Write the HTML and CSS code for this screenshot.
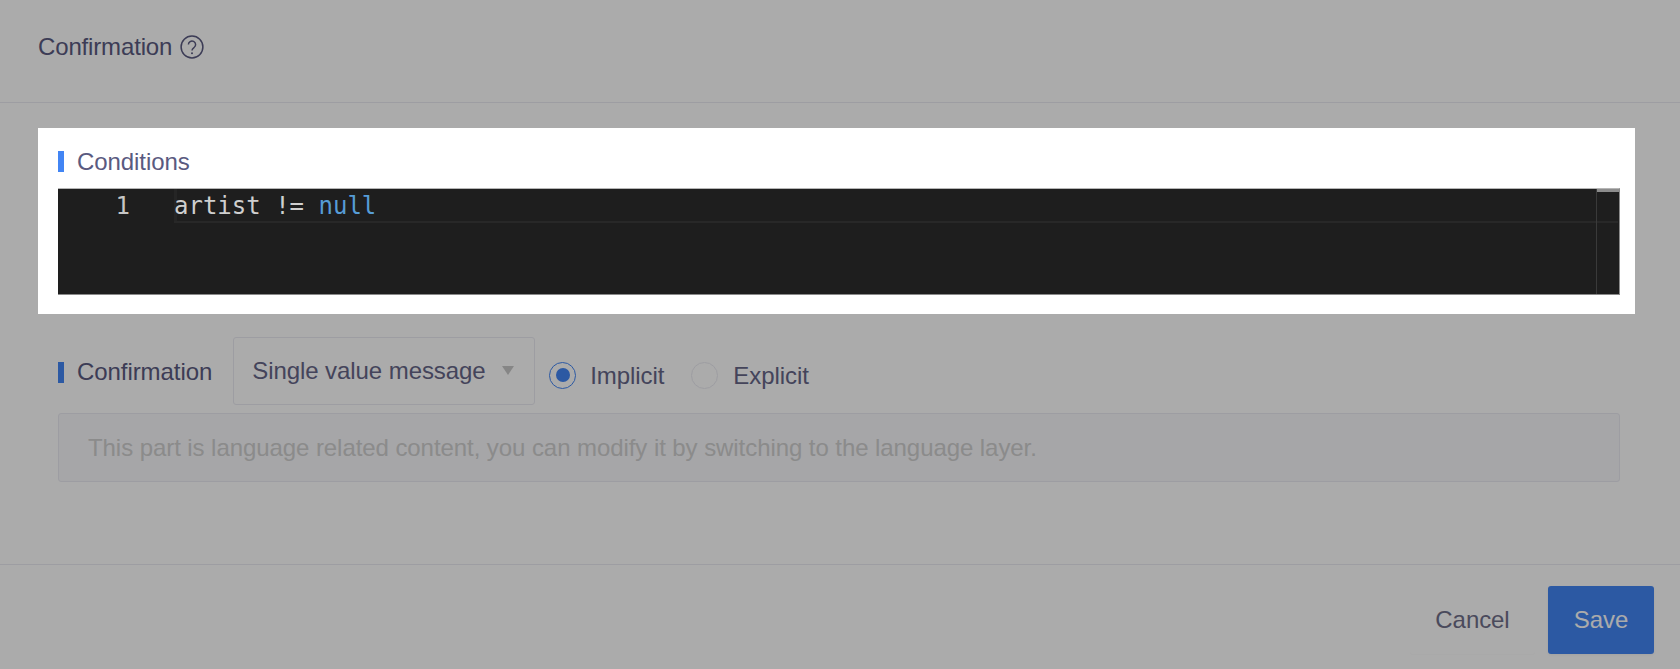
FILE: index.html
```html
<!DOCTYPE html>
<html lang="en">
<head>
<meta charset="utf-8">
<title>Confirmation</title>
<link rel="stylesheet" href="styles.css">
</head>
<body>
<div class="page">
  <header class="header">
    <h1 class="title">Confirmation</h1>
    <svg class="help" viewBox="0 0 24 24" width="24" height="24" aria-hidden="true">
      <circle cx="12" cy="12" r="10.9" fill="none" stroke="currentColor" stroke-width="1.5"/>
      <path d="M8.4 9.6a3.6 3.6 0 1 1 5.7 2.9c-1.3.9-2.1 1.4-2.1 3" fill="none" stroke="currentColor" stroke-width="1.5"/>
      <circle cx="12" cy="18.2" r="1" fill="currentColor"/>
    </svg>
  </header>
  <main class="main">
    <section class="highlight">
      <div class="label label-conditions">Conditions</div>
      <div class="editor">
        <div class="gutter"><span class="lineno">1</span></div>
        <div class="code"><div class="line">artist != <span class="kw">null</span></div></div>
        <div class="ruler"><div class="ruler-thumb"></div></div>
      </div>
    </section>
    <section class="confirm">
      <div class="confirm-row">
        <div class="label">Confirmation</div>
        <div class="select"><span>Single value message</span><i class="caret"></i></div>
        <label class="radio"><span class="dot dot-on"></span><span>Implicit</span></label>
        <label class="radio"><span class="dot"></span><span>Explicit</span></label>
      </div>
      <div class="info">This part is language related content, you can modify it by switching to the language layer.</div>
    </section>
  </main>
  <footer class="footer">
    <button class="btn btn-cancel" type="button">Cancel</button>
    <button class="btn btn-save" type="button">Save</button>
  </footer>
  <div class="mask"></div>
</div>
</body>
</html>
```
FILE: styles.css
```css
* { box-sizing: border-box; }
html, body { margin: 0; padding: 0; height: 100%; background: #fff; }
body {
  font-family: "Liberation Sans", Arial, sans-serif;
  font-size: 24px;
  letter-spacing: -0.07px;
  color: #5a5a80;
  overflow: hidden;
}
.page { height: 669px; display: flex; flex-direction: column; }

.header {
  height: 103px;
  flex: none;
  display: flex;
  align-items: center;
  gap: 8px;
  padding: 0 0 8px 38px;
  border-bottom: 1px solid #ebebf2;
}
.title { margin: 0; font-size: 24px; font-weight: 400; line-height: 32px; color: #5a5a80; letter-spacing: -0.15px; }
.help { color: #5a5a80; flex: none; }

.main { flex: 1; padding: 25px 45px 0 38px; }
.highlight {
  position: relative;
  z-index: 2;
  width: 1597px;
  height: 186px;
  background: #fff;
  padding: 20px 15px 0 20px;
}
.label {
  display: flex;
  align-items: center;
  height: 26px;
  line-height: 26px;
  color: #5a5a80;
  padding-left: 19px;
  position: relative;
  flex: none;
}
.label::before {
  content: "";
  position: absolute;
  left: 0;
  top: 3px;
  width: 6px;
  height: 21px;
  background: #4285f4;
}
.label-conditions { margin-bottom: 14px; padding-top: 2px; }

.editor {
  height: 107px;
  display: flex;
  background: #1e1e1e;
  border: 1px solid #8a8a8a;
  border-top-color: #b5b5b5;
  border-left: 0;
  font-family: "DejaVu Sans Mono", "Liberation Mono", monospace;
  font-size: 24px;
  letter-spacing: 0;
  line-height: 34px;
}
.gutter { width: 117px; flex: none; text-align: right; padding-right: 45px; color: #c6c6c6; }
.lineno { display: block; margin-top: 0; }
.code { flex: 1; min-width: 0; }
.line {
  height: 34px;
  color: #cfcfcf;
  border-bottom: 2px solid #282828;
  box-shadow: inset 3px 0 #252525;
  margin-left: -1px;
  margin-right: -22px;
  line-height: 34px;
  white-space: pre;
}
.kw { color: #569cd6; }
.ruler { width: 23px; flex: none; border-left: 1px solid #3a3a3a; position: relative; }
.ruler-thumb { height: 3px; background: #8c8c8c; }

.confirm { margin-top: 23px; padding-left: 20px; width: 1582px; }
.confirm-row { display: flex; align-items: flex-start; height: 68px; margin-bottom: 8px; }
.confirm-row .label { margin-top: 22px; height: 26px; }
.select {
  width: 302px;
  height: 68px;
  margin-left: 21px;
  border: 1px solid #ebebf2;
  border-radius: 3px;
  display: flex;
  align-items: center;
  padding: 0 20px 0 18px;
  justify-content: space-between;
  color: #666688;
}
.caret {
  width: 0;
  height: 0;
  border-left: 6.5px solid transparent;
  border-right: 6.5px solid transparent;
  border-top: 9px solid #c8c8c8;
  position: relative;
  top: -1px;
}
.radio { display: flex; align-items: center; gap: 14px; height: 68px; color: #666688; position: relative; top: 5px; }
.select + .radio { margin-left: 14px; }
.radio + .radio { margin-left: 27px; gap: 15px; }
.dot {
  width: 27px;
  height: 27px;
  border-radius: 50%;
  border: 1px solid #ebebf2;
  background: #fff;
  display: flex;
  align-items: center;
  justify-content: center;
  flex: none;
  position: relative;
  top: -1px;
}
.dot-on { border-color: #4285f4; }
.dot-on::after { content: ""; width: 14px; height: 14px; border-radius: 50%; background: #4285f4; }
.info {
  height: 69px;
  line-height: 67px;
  padding-left: 29px;
  background: #f8f8fb;
  border: 1px solid #ebebf2;
  border-radius: 3px;
  color: #cfcfcf;
}

.footer {
  height: 105px;
  flex: none;
  border-top: 1px solid #ebebf2;
  display: flex;
  align-items: flex-start;
  justify-content: flex-end;
  gap: 13px;
  padding: 21px 26px 0 0;
}
.btn {
  font: inherit;
  letter-spacing: inherit;
  border: 0;
  border-radius: 3px;
  height: 68px;
  cursor: pointer;
}
.btn-cancel { width: 125px; background: #fff; color: #6f6f8a; box-shadow: 0 1px 1px rgba(0, 0, 0, 0.015); }
.btn-save { width: 106px; background: #4285f4; color: #fff; box-shadow: 0 1px 3px rgba(0, 0, 0, 0.05); }

.mask {
  position: fixed;
  inset: 0;
  z-index: 1;
  background: rgba(0, 0, 0, 0.33);
}
```
